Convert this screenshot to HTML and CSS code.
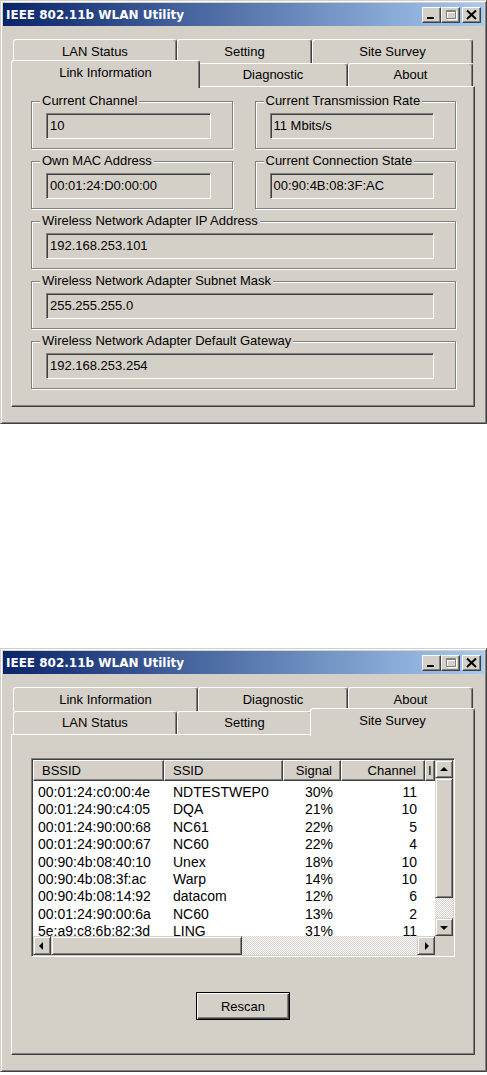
FILE: index.html
```html
<!DOCTYPE html>
<html lang="en">
<head>
    <meta charset="UTF-8">
    <title>IEEE 802.11b WLAN Utility</title>
    <link rel="stylesheet" href="styles.css">
</head>
<body>

    <!-- Link Information page -->
    <div class="window">
        <div class="titlebar">
            <span class="title">IEEE 802.11b WLAN Utility</span>
            <div class="caption-buttons">
                <span class="cap-btn"><svg width="17" height="14"><rect x="4" y="9" width="7" height="2" fill="#000"/></svg></span>
                <span class="cap-btn"><svg width="17" height="14"><path d="M4.5 2.5h9v8h-9z M4.5 3.5h9" fill="none" stroke="#fff" transform="translate(1 1)"/><path d="M4.5 2.5h9v8h-9z M4.5 3.5h9" fill="none" stroke="#808080"/></svg></span>
                <span class="cap-btn close"><svg width="17" height="14"><path d="M4 2.5l9 8.5M13 2.5l-9 8.5" stroke="#000" stroke-width="2"/></svg></span>
            </div>
        </div>
        <div class="client">
            <div class="tab-row back">
                <div class="tab t-lan">LAN Status</div>
                <div class="tab t-setting">Setting</div>
                <div class="tab t-survey">Site Survey</div>
            </div>
            <div class="tab-row front">
                <div class="tab t-link selected">Link Information</div>
                <div class="tab t-diag">Diagnostic</div>
                <div class="tab t-about">About</div>
            </div>
            <div class="panel info-panel">
                <div class="pair">
                    <fieldset class="group"><legend>Current Channel</legend><div class="field">10</div></fieldset>
                    <fieldset class="group"><legend>Current Transmission Rate</legend><div class="field">11 Mbits/s</div></fieldset>
                </div>
                <div class="pair">
                    <fieldset class="group"><legend>Own MAC Address</legend><div class="field">00:01:24:D0:00:00</div></fieldset>
                    <fieldset class="group"><legend>Current Connection State</legend><div class="field">00:90:4B:08:3F:AC</div></fieldset>
                </div>
                <fieldset class="group"><legend>Wireless Network Adapter IP Address</legend><div class="field">192.168.253.101</div></fieldset>
                <fieldset class="group"><legend>Wireless Network Adapter Subnet Mask</legend><div class="field">255.255.255.0</div></fieldset>
                <fieldset class="group"><legend>Wireless Network Adapter Default Gateway</legend><div class="field">192.168.253.254</div></fieldset>
            </div>
        </div>
    </div>

    <!-- Site Survey page -->
    <div class="window second">
        <div class="titlebar">
            <span class="title">IEEE 802.11b WLAN Utility</span>
            <div class="caption-buttons">
                <span class="cap-btn"><svg width="17" height="14"><rect x="4" y="9" width="7" height="2" fill="#000"/></svg></span>
                <span class="cap-btn"><svg width="17" height="14"><path d="M4.5 2.5h9v8h-9z M4.5 3.5h9" fill="none" stroke="#fff" transform="translate(1 1)"/><path d="M4.5 2.5h9v8h-9z M4.5 3.5h9" fill="none" stroke="#808080"/></svg></span>
                <span class="cap-btn close"><svg width="17" height="14"><path d="M4 2.5l9 8.5M13 2.5l-9 8.5" stroke="#000" stroke-width="2"/></svg></span>
            </div>
        </div>
        <div class="client">
            <div class="tab-row back">
                <div class="tab t-link">Link Information</div>
                <div class="tab t-diag">Diagnostic</div>
                <div class="tab t-about">About</div>
            </div>
            <div class="tab-row front">
                <div class="tab t-lan">LAN Status</div>
                <div class="tab t-setting">Setting</div>
                <div class="tab t-survey selected">Site Survey</div>
            </div>
            <div class="panel survey-panel">
                <div class="listview">
                    <div class="list-main">
                        <div class="list-head">
                            <div class="hcell">BSSID</div>
                            <div class="hcell">SSID</div>
                            <div class="hcell num">Signal</div>
                            <div class="hcell num">Channel</div>
                            <div class="hcell more">I</div>
                        </div>
                        <div class="list-body">
                            <div class="lrow"><span>00:01:24:c0:00:4e</span><span>NDTESTWEP0</span><span class="num">30%</span><span class="num">11</span></div>
                            <div class="lrow"><span>00:01:24:90:c4:05</span><span>DQA</span><span class="num">21%</span><span class="num">10</span></div>
                            <div class="lrow"><span>00:01:24:90:00:68</span><span>NC61</span><span class="num">22%</span><span class="num">5</span></div>
                            <div class="lrow"><span>00:01:24:90:00:67</span><span>NC60</span><span class="num">22%</span><span class="num">4</span></div>
                            <div class="lrow"><span>00:90:4b:08:40:10</span><span>Unex</span><span class="num">18%</span><span class="num">10</span></div>
                            <div class="lrow"><span>00:90:4b:08:3f:ac</span><span>Warp</span><span class="num">14%</span><span class="num">10</span></div>
                            <div class="lrow"><span>00:90:4b:08:14:92</span><span>datacom</span><span class="num">12%</span><span class="num">6</span></div>
                            <div class="lrow"><span>00:01:24:90:00:6a</span><span>NC60</span><span class="num">13%</span><span class="num">2</span></div>
                            <div class="lrow"><span>5e:a9:c8:6b:82:3d</span><span>LING</span><span class="num">31%</span><span class="num">11</span></div>
                        </div>
                    </div>
                    <div class="vscroll">
                        <span class="sbtn"><svg width="16" height="16"><path d="M4 10h8l-4-4z" fill="#000"/></svg></span>
                        <span class="thumb"></span>
                        <span class="track"></span>
                        <span class="sbtn"><svg width="16" height="16"><path d="M4 7h8l-4 4z" fill="#000"/></svg></span>
                    </div>
                    <div class="hscroll">
                        <span class="sbtn"><svg width="16" height="16"><path d="M9 4v8l-4-4z" fill="#000"/></svg></span>
                        <span class="thumb"></span>
                        <span class="track"></span>
                        <span class="sbtn"><svg width="16" height="16"><path d="M7 4v8l4-4z" fill="#000"/></svg></span>
                    </div>
                    <div class="corner"></div>
                </div>
                <button class="push default">Rescan</button>
            </div>
        </div>
    </div>

</body>
</html>
```

FILE: styles.css
```css
/* Windows 2000 style dialog */
* {
    box-sizing: border-box;
}
body {
    margin: 0;
    background: #fff;
    font-family: "Liberation Sans", Arial, sans-serif;
    font-size: 13px;
    color: #000;
}

.window {
    width: 487px;
    height: 424px;
    padding: 2px;
    background: #d4d0c8;
    border: 1px solid;
    border-color: #d4d0c8 #404040 #404040 #d4d0c8;
    box-shadow: inset 1px 1px #fff, inset -1px -1px #808080;
}
.window.second {
    margin-top: 224px;
}

.titlebar {
    height: 23px;
    display: flex;
    align-items: center;
    justify-content: space-between;
    padding: 1px 3px 0 3px;
    background: linear-gradient(to right, #0a246a, #a6caf0);
}
.title {
    color: #fff;
    font: bold 12px "DejaVu Sans", sans-serif;
}
.caption-buttons {
    display: flex;
}
.cap-btn {
    width: 19px;
    height: 16px;
    display: flex;
    align-items: center;
    justify-content: center;
    background: #d4d0c8;
    border: 1px solid;
    border-color: #fff #404040 #404040 #fff;
    box-shadow: inset -1px -1px #808080;
}
.cap-btn.close {
    margin-left: 2px;
}

.client {
    padding: 13px 0 0 8px;
}

/* tabs */
.tab-row {
    display: flex;
    margin-left: 2px;
}
.tab {
    flex: none;
    width: var(--w);
    height: 23px;
    line-height: 22px;
    text-align: center;
    background: #d4d0c8;
    border-top: 1px solid #fff;
    border-left: 1px solid #fff;
    border-right: 1px solid #404040;
    border-radius: 3px 3px 0 0;
    box-shadow: inset -1px 0 #808080;
}
.tab-row.back .tab {
    height: 24px;
    line-height: 24px;
}
.tab.selected {
    position: relative;
    z-index: 1;
    width: calc(var(--w) + 4px);
    height: 28px;
    margin: -3px -2px -2px;
    padding-top: 1px;
    line-height: 21px;
}
.t-lan { --w: 164px; }
.t-setting { --w: 135px; }
.t-survey { --w: 161px; }
.t-link { --w: 185px; }
.t-diag { --w: 150px; }
.t-about { --w: 125px; }

.panel {
    width: 464px;
    height: 321px;
    border: 1px solid;
    border-color: #fff #404040 #404040 #fff;
    box-shadow: inset -1px -1px #808080;
}

/* link information page */
.info-panel {
    display: flex;
    flex-direction: column;
    gap: 5px;
    padding: 7px 18px 0 19px;
}
.pair {
    display: grid;
    grid-template-columns: 1fr 1fr;
    gap: 22px;
}
.group {
    margin: 0;
    padding: 0;
    min-width: 0;
    border: 1px solid #808080;
    box-shadow: inset 1px 1px #fff, 1px 1px #fff;
}
.group legend {
    margin-left: 8px;
    padding: 0 2px;
    line-height: 14px;
    background: #d4d0c8;
}
.field {
    height: 26px;
    margin: 5px 21px 9px 14px;
    padding: 0 3px;
    line-height: 24px;
    border: 1px solid;
    border-color: #808080 #fff #fff #808080;
    box-shadow: inset 1px 1px #404040, inset -1px -1px #d4d0c8;
}

/* site survey page */
.survey-panel {
    display: flex;
    flex-direction: column;
    align-items: center;
    padding-top: 23px;
}
.listview {
    width: 424px;
    height: 199px;
    display: grid;
    grid-template-columns: 402px 18px;
    grid-template-rows: 176px 19px;
    border: 1px solid;
    border-color: #808080 #fff #fff #808080;
    box-shadow: inset 1px 1px #404040, inset -1px -1px #d4d0c8;
    padding: 1px;
}
.list-main {
    background: #fff;
    overflow: hidden;
}
.list-head, .lrow {
    display: grid;
    grid-template-columns: 131px 119px 58px 84px 10px;
}
.hcell {
    height: 21px;
    line-height: 20px;
    padding: 0 8px;
    white-space: nowrap;
    overflow: hidden;
    background: #d4d0c8;
    border: 1px solid;
    border-color: #fff #404040 #404040 #fff;
    box-shadow: inset -1px -1px #808080;
}
.hcell.more {
    padding: 0 2px;
}
.num {
    text-align: right;
}
.list-body {
    padding-top: 3px;
}
.lrow {
    height: 17.4px;
    line-height: 17px;
    font-size: 14px;
}
.lrow span {
    padding: 0 8px 0 9px;
    white-space: nowrap;
}
.lrow span:first-child {
    padding-left: 5px;
}

.vscroll, .hscroll {
    display: flex;
}
.vscroll {
    flex-direction: column;
}
.sbtn, .thumb {
    flex: none;
    display: flex;
    align-items: center;
    justify-content: center;
    background: #d4d0c8;
    border: 1px solid;
    border-color: #d4d0c8 #404040 #404040 #d4d0c8;
    box-shadow: inset 1px 1px #fff, inset -1px -1px #808080;
}
.vscroll .sbtn {
    height: 18px;
}
.hscroll .sbtn {
    width: 18px;
}
.vscroll .thumb {
    height: 120px;
}
.hscroll .thumb {
    width: 191px;
}
.track {
    flex: 1;
    background: repeating-conic-gradient(#fff 0 25%, #d4d0c8 0 50%) 0 0 / 2px 2px;
}
.corner {
    background: #d4d0c8;
}

.push {
    width: 94px;
    height: 28px;
    margin-top: 35px;
    font: 13px "Liberation Sans", Arial, sans-serif;
    background: #d4d0c8;
    border: 1px solid #000;
    box-shadow: inset 1px 1px #fff, inset -1px -1px #404040, inset -2px -2px #808080;
    padding: 0;
}
```
